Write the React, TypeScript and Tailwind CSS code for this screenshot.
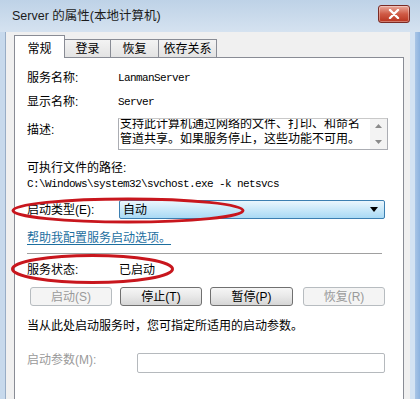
import React from 'react';

const sans = "font-['Liberation_Sans','Noto_Sans_CJK_SC',sans-serif]";
const mono = "font-['Liberation_Mono','Noto_Sans_CJK_SC',monospace] text-[11px] tracking-[-0.6px]";

const Button: React.FC<{ label: string; disabled?: boolean; className?: string }> = ({ label, disabled, className }) => (
    <div
        className={
            'flex h-[19px] items-center justify-center rounded-[3px] border text-[12px] leading-none ' +
            (disabled
                ? 'border-[#b7bcc0] bg-[#f4f4f4] text-[#9a9a9a] '
                : 'border-[#707070] bg-gradient-to-b from-[#f6f6f6] via-[#e8e8e8] to-[#d6d6d6] text-black ') +
            (className ?? '')
        }
    >
        {label}
    </div>
);

export default function App() {
    return (
        <div className={`relative h-[399px] w-[420px] overflow-hidden bg-[#c4d6ea] text-[12px] text-black ${sans}`}>
            {/* title bar */}
            <div className="flex h-[32px] items-center bg-gradient-to-b from-[#bed2e7] to-[#d5e2f0] pl-[12px] pr-[10px]">
                <span className="text-[12.5px] text-[#1b1b1b]">Server 的属性(本地计算机)</span>
                <div className="ml-auto -mt-[5px] flex h-[18px] w-[32px] items-center justify-center rounded-[3px] border border-[#7a2b25] bg-gradient-to-b from-[#e9a99c] via-[#cf5a45] to-[#b8321d] shadow-[inset_0_0_0_1px_rgba(255,255,255,0.35)]">
                    <svg width="12" height="10" viewBox="0 0 12 10">
                        <path d="M2 1 L10 9 M10 1 L2 9" stroke="#fff" strokeWidth="2.4" strokeLinecap="round" />
                    </svg>
                </div>
            </div>

            <div className="flex h-[367px]">
                {/* left frame */}
                <div className="w-[6px] border-r border-[#98adc6] bg-[#c7d9ec]" />

                {/* client area */}
                <div className="flex flex-1 flex-col bg-[#f0f0f0] pl-[8px] pr-[6px] pt-[3px]">
                    {/* tabs */}
                    <div className="relative z-10 -mb-px flex h-[23px] items-end">
                        <div className="flex h-[23px] w-[51px] items-start justify-center border border-b-0 border-[#898c95] bg-white pt-[4px]">
                            常规
                        </div>
                        <div className="flex h-[19px] w-[46px] items-center justify-center border border-l-0 border-[#898c95] bg-gradient-to-b from-[#f3f3f3] to-[#e3e3e3]">
                            登录
                        </div>
                        <div className="flex h-[19px] w-[48px] items-center justify-center border border-l-0 border-[#898c95] bg-gradient-to-b from-[#f3f3f3] to-[#e3e3e3]">
                            恢复
                        </div>
                        <div className="flex h-[19px] w-[58px] items-center justify-center border border-l-0 border-[#898c95] bg-gradient-to-b from-[#f3f3f3] to-[#e3e3e3]">
                            依存关系
                        </div>
                    </div>

                    {/* panel */}
                    <div className="flex-1 border border-b-0 border-[#898c95] bg-white pl-[12px] pt-[12px] leading-[16px]">
                        <div className="flex h-[16px]">
                            <span className="w-[91px]">服务名称:</span>
                            <span className={mono}>LanmanServer</span>
                        </div>
                        <div className="mt-[8px] flex h-[16px]">
                            <span className="w-[91px]">显示名称:</span>
                            <span className={mono}>Server</span>
                        </div>
                        <div className="mt-[8px] flex">
                            <span className="w-[91px] pt-[4px]">描述:</span>
                            <div className="relative flex h-[32px] w-[270px] overflow-hidden border border-[#abadb3] border-t-[#c9c9c9] bg-white">
                                <div className="flex-1 pl-[1px] text-[12px] leading-[15px]">
                                    <div className="-mt-[2px]">支持此计算机通过网络的文件、打印、和命名</div>
                                    <div>管道共享。如果服务停止，这些功能不可用。</div>
                                </div>
                                <div className="flex w-[17px] flex-col items-center justify-between bg-[#f3f3f3] py-[5px]">
                                    <svg width="7" height="4" viewBox="0 0 7 4">
                                        <path d="M0 4 L3.5 0 L7 4 Z" fill="#8a8a8a" />
                                    </svg>
                                    <svg width="7" height="4" viewBox="0 0 7 4">
                                        <path d="M0 0 L3.5 4 L7 0 Z" fill="#8a8a8a" />
                                    </svg>
                                </div>
                            </div>
                        </div>
                        <div className="mt-[10px] h-[16px]">可执行文件的路径:</div>
                        <div className={`h-[16px] ${mono}`}>C:\Windows\system32\svchost.exe -k netsvcs</div>
                        <div className="mt-[8px] flex h-[19px] items-center">
                            <span className="w-[92px]">启动类型(E):</span>
                            <div className="flex h-[19px] w-[266px] items-center rounded-[2px] border border-[#3c7fb1] bg-gradient-to-b from-[#eaf6fd] via-[#c9e8f9] to-[#a9daf5] pl-[3px] pr-[6px]">
                                <span>自动</span>
                                <svg className="ml-auto" width="8" height="5" viewBox="0 0 8 5">
                                    <path d="M0 0 L8 0 L4 5 Z" fill="#000" />
                                </svg>
                            </div>
                        </div>
                        <div className="mt-[11px] h-[16px] text-[#1d6f9f] underline decoration-[#1d6f9f] underline-offset-[2px]">
                            帮助我配置服务启动选项。
                        </div>
                        <div className="mt-[7px] h-px w-[355px] bg-[#a0a0a0]" />
                        <div className="mt-[8px] flex h-[16px]">
                            <span className="w-[92px]">服务状态:</span>
                            <span>已启动</span>
                        </div>
                        <div className="mt-[9px] flex pl-[3px]">
                            <Button label="启动(S)" disabled className="w-[82px]" />
                            <Button label="停止(T)" className="ml-[8px] w-[82px]" />
                            <Button label="暂停(P)" className="ml-[8px] w-[83px]" />
                            <Button label="恢复(R)" disabled className="ml-[10px] w-[82px]" />
                        </div>
                        <div className="mt-[12px] h-[16px]">当从此处启动服务时，您可指定所适用的启动参数。</div>
                        <div className="mt-[19px] flex h-[20px] items-center">
                            <span className="-mt-[6px] w-[110px] text-[#9a9a9a]">启动参数(M):</span>
                            <div className="h-[20px] w-[248px] rounded-[2px] border border-[#b5b9bd] bg-white" />
                        </div>
                    </div>
                </div>

                {/* right frame */}
                <div className="flex w-[10px]">
                    <div className="w-[5px] bg-[#d4e3f3]" />
                    <div className="w-[5px] bg-gradient-to-r from-[#a9c5e6] to-[#8db3df]" />
                </div>
            </div>

            {/* red hand-drawn marks */}
            <svg className="pointer-events-none absolute inset-0" width="420" height="399">
                <ellipse cx="128" cy="210.5" rx="115" ry="11.5" fill="none" stroke="#c8161d" strokeWidth="3" />
                <ellipse cx="92.5" cy="269" rx="80" ry="13.5" fill="none" stroke="#c8161d" strokeWidth="3" />
            </svg>
        </div>
    );
}
